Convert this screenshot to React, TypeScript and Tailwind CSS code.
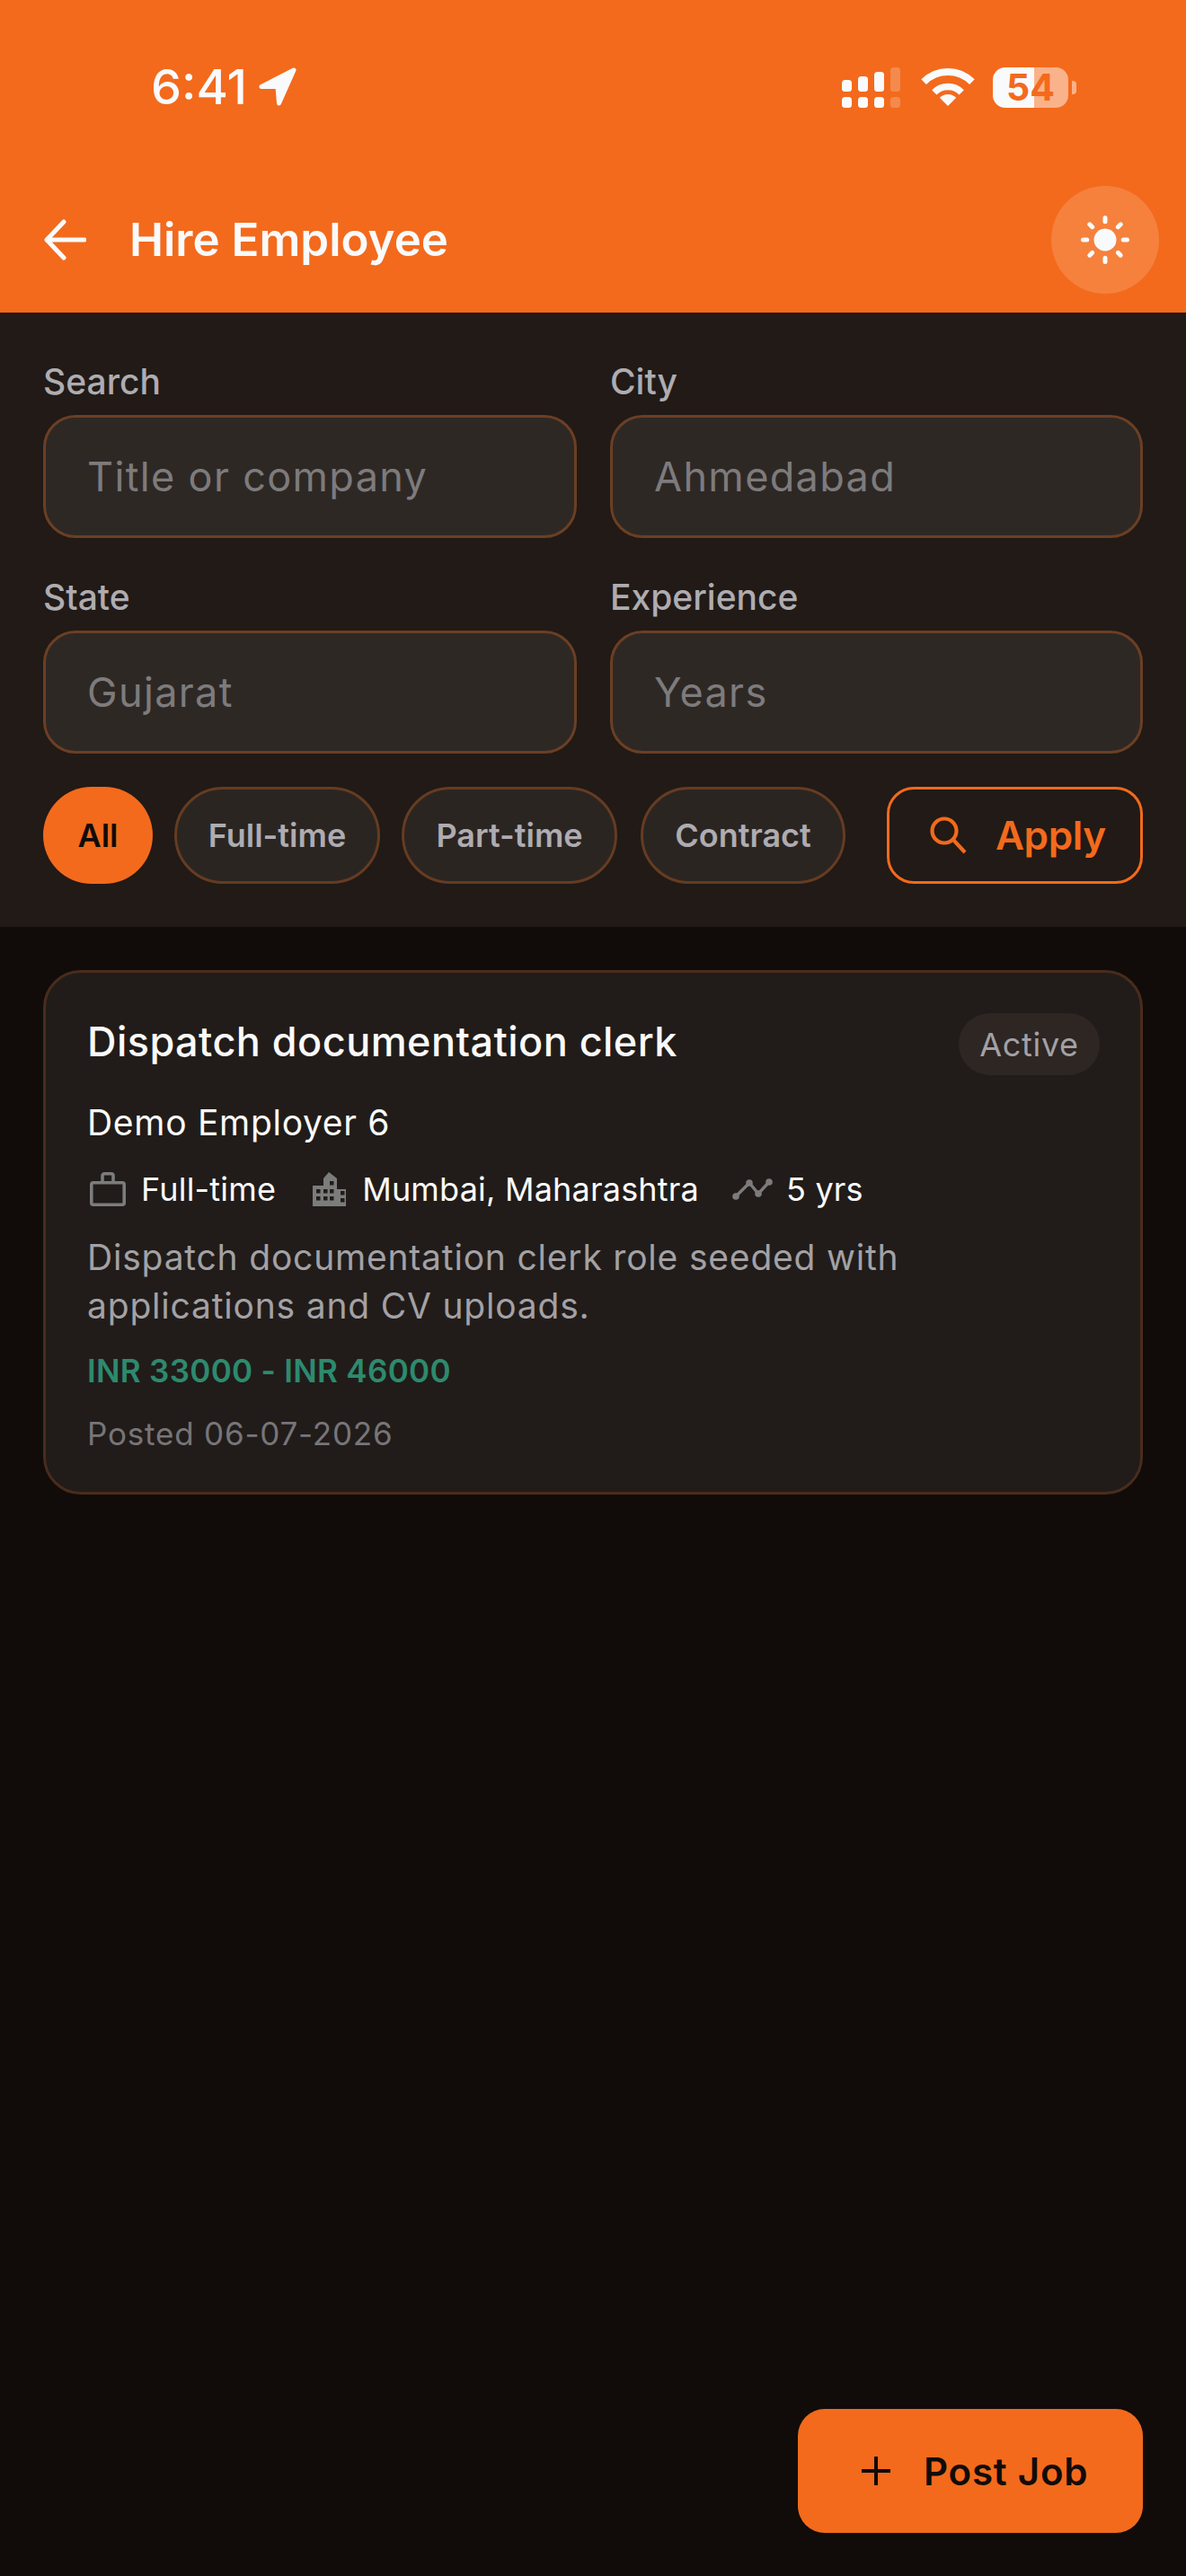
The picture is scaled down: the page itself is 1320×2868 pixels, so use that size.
import React from "react";

const labelCls = "block h-[48px] text-[39px] leading-[48px] text-[#aeacb1] font-medium";
const inputCls =
  "mt-[13px] block w-full h-[137px] rounded-[36px] border-[3px] border-[#6b3f24] bg-[#2e2825] px-[46px] text-[45px] tracking-[1.35px] text-[#e5e5e5] outline-none placeholder:text-[#7d7b7c]";
const chipCls =
  "h-[108px] flex items-center justify-center rounded-full border-[3px] border-[#653c22] bg-[#2b2522] text-[36px] font-semibold text-[#aeacb1]";

function Field({ label, placeholder }: { label: string; placeholder: string }) {
  return (
    <label className="block">
      <span className={labelCls}>{label}</span>
      <input className={inputCls} placeholder={placeholder} />
    </label>
  );
}

function Signal() {
  const cols = [
    { x: 0, top: 14, o: 1 },
    { x: 18, top: 10, o: 1 },
    { x: 36, top: 5, o: 1 },
    { x: 54, top: 0, o: 0.22 },
  ];
  return (
    <svg width="65" height="45" viewBox="0 0 65 45" className="shrink-0">
      {cols.map((c) => (
        <g key={c.x} fill="#f9fafc" opacity={c.o}>
          <rect x={c.x} y={c.top} width="11" height={27 - c.top} rx="3.5" />
          <rect x={c.x} y="33" width="11" height="12" rx="3.5" />
        </g>
      ))}
    </svg>
  );
}

function Wifi() {
  return (
    <svg width="60" height="44" viewBox="0 0 60 44" className="shrink-0">
      <path d="M3.1 16.1A38 38 0 0 1 56.9 16.1" fill="none" stroke="#f9fafc" strokeWidth="8" />
      <path d="M14.8 27.8A21.5 21.5 0 0 1 45.2 27.8" fill="none" stroke="#f9fafc" strokeWidth="7.5" />
      <path d="M30 43L20.8 33.8A13 13 0 0 1 39.2 33.8Z" fill="#f9fafc" />
    </svg>
  );
}

function Battery() {
  return (
    <div className="flex items-center shrink-0">
      <div className="relative flex w-[84px] h-[45px]">
        <div className="h-full w-[46px] rounded-l-[14px] bg-[#f9fafc]" />
        <div className="h-full w-[38px] rounded-r-[14px] bg-[#fab28a]" />
        <span className="absolute inset-0 flex items-center justify-center text-[41px] leading-[45px] font-bold text-[#f36a1c]">
          54
        </span>
      </div>
      <div className="ml-[4px] w-[5px] h-[15px] rounded-r-[4px] bg-[#fab28a]" />
    </div>
  );
}

function Sun() {
  const rays = [
    [33, 8.5, 33, 12.8],
    [33, 53.2, 33, 57.5],
    [8.5, 33, 12.8, 33],
    [53.2, 33, 57.5, 33],
    [15.8, 15.8, 18.7, 18.7],
    [47.3, 47.3, 50.2, 50.2],
    [50.2, 15.8, 47.3, 18.7],
    [18.7, 47.3, 15.8, 50.2],
  ];
  return (
    <svg width="66" height="66" viewBox="0 0 66 66">
      <circle cx="33" cy="33" r="12.5" fill="#f9fafc" />
      {rays.map((r, i) => (
        <line key={i} x1={r[0]} y1={r[1]} x2={r[2]} y2={r[3]} stroke="#f9fafc" strokeWidth="5" strokeLinecap="round" />
      ))}
    </svg>
  );
}

function Briefcase() {
  return (
    <svg width="40" height="38" viewBox="0 0 40 38" className="shrink-0" fill="none" stroke="#7c7c7c" strokeWidth="3.6" strokeLinejoin="round">
      <rect x="1.8" y="11.8" width="36.4" height="24.4" rx="2" />
      <path d="M14 11.5V4a2.2 2.2 0 0 1 2.2-2.2h7.6A2.2 2.2 0 0 1 26 4v7.5" />
    </svg>
  );
}

function Building() {
  const windows = [
    [4, 19], [12, 19], [19, 10], [19, 19], [31, 21],
    [4, 27], [12, 27], [19, 27], [31, 29],
  ];
  return (
    <svg width="37" height="38" viewBox="0 0 37 38" className="shrink-0">
      <path d="M0 15H12V7L18 0L27 7V19H37V38H0Z" fill="#7c7c7c" />
      {windows.map((w, i) => (
        <rect key={i} x={w[0]} y={w[1]} width="4.5" height="4.5" fill="#211c19" />
      ))}
    </svg>
  );
}

function Trend() {
  const pts = [
    [4, 21],
    [19, 6],
    [29, 18],
    [41, 5],
  ];
  return (
    <svg width="45" height="26" viewBox="0 0 45 26" className="shrink-0">
      <polyline points={pts.map((p) => p.join(",")).join(" ")} fill="none" stroke="#7c7c7c" strokeWidth="3.4" />
      {pts.map((p, i) => (
        <circle key={i} cx={p[0]} cy={p[1]} r="3.8" fill="#7c7c7c" />
      ))}
    </svg>
  );
}

export default function App() {
  return (
    <div className="w-[1320px] h-[2868px] flex flex-col bg-[#110c0a] font-['Inter',sans-serif] overflow-hidden">
      <header className="h-[348px] shrink-0 bg-[#f36a1c]">
        <div className="h-[194px] flex items-center pl-[168px] pr-[122px]">
          <span className="text-[54px] leading-[60px] font-medium text-[#f9fafc]">6:41</span>
          <svg width="44" height="44" viewBox="0 0 44 44" className="ml-[12px]">
            <path d="M40 3L4 21.5H22L23.5 40Z" fill="#f9fafc" stroke="#f9fafc" strokeWidth="5" strokeLinejoin="round" />
          </svg>
          <div className="ml-auto flex items-center">
            <Signal />
            <div className="ml-[23px]">
              <Wifi />
            </div>
            <div className="ml-[20px]">
              <Battery />
            </div>
          </div>
        </div>
        <div className="mt-[13px] h-[120px] flex items-center pl-[48px] pr-[30px]">
          <svg width="48" height="46" viewBox="0 0 48 46" fill="none" stroke="#f9fafc" strokeWidth="5" strokeLinecap="round" strokeLinejoin="round" className="shrink-0">
            <path d="M46 23H4M23 3L4 23L23 43" />
          </svg>
          <h1 className="ml-[48px] text-[51px] leading-[60px] font-semibold text-[#f9fafc]">Hire Employee</h1>
          <div className="ml-auto w-[120px] h-[120px] rounded-full bg-[#f5813c] flex items-center justify-center">
            <Sun />
          </div>
        </div>
      </header>

      <section className="h-[684px] shrink-0 bg-[#211a16] px-[48px] pt-[53px]">
        <div className="grid grid-cols-[594px_593px] gap-x-[37px] gap-y-[42px]">
          <Field label="Search" placeholder="Title or company" />
          <Field label="City" placeholder="Ahmedabad" />
          <Field label="State" placeholder="Gujarat" />
          <Field label="Experience" placeholder="Years" />
        </div>
        <div className="mt-[37px] flex items-center gap-[24px]">
          <div className="w-[122px] h-[108px] rounded-full bg-[#f36a1c] flex items-center justify-center text-[36px] font-semibold text-[#110c0a]">
            All
          </div>
          <div className={`${chipCls} w-[229px]`}>Full-time</div>
          <div className={`${chipCls} w-[240px]`}>Part-time</div>
          <div className={`${chipCls} w-[228px] ml-[2px]`}>Contract</div>
          <button className="ml-auto w-[285px] h-[108px] pl-[45px] rounded-[30px] border-[3px] border-[#f36a1c] flex items-center text-[#f36a1c] text-[44px] font-semibold tracking-[-0.4px]">
            <svg width="42" height="42" viewBox="0 0 42 42" fill="none" stroke="#f36a1c" strokeWidth="4.2" className="shrink-0">
              <circle cx="16" cy="16" r="13.5" />
              <path d="M26 26L39 40" />
            </svg>
            <span className="ml-[31px]">Apply</span>
          </button>
        </div>
      </section>

      <main className="px-[48px] pt-[48px]">
        <article className="h-[584px] rounded-[42px] border-[3px] border-[#4a2c1c] bg-[#211c19] px-[46px] pt-[46px]">
          <div className="flex items-start justify-between">
            <h2 className="text-[45px] leading-[62px] font-medium tracking-[0.45px] text-[#fafafa]">Dispatch documentation clerk</h2>
            <span className="h-[69px] w-[157px] -mr-[1px] -mt-[1px] rounded-full bg-[#2d2623] flex items-center justify-center text-[36px] tracking-[0.7px] text-[#a3a1a6]">
              Active
            </span>
          </div>
          <p className="mt-[26px] text-[39px] leading-[54px] tracking-[0.7px] text-[#fafafa]">Demo Employer 6</p>
          <div className="mt-[24px] h-[46px] flex items-center text-[36px] leading-[46px] tracking-[0.2px] text-[#fafafa]">
            <span className="ml-[3px]">
              <Briefcase />
            </span>
            <span className="ml-[17px]">Full-time</span>
            <span className="ml-[41px]">
              <Building />
            </span>
            <span className="ml-[18px]">Mumbai, Maharashtra</span>
            <span className="ml-[37px]">
              <Trend />
            </span>
            <span className="ml-[15px]">5 yrs</span>
          </div>
          <p className="mt-[26px] w-[1000px] text-[39px] leading-[54px] tracking-[0.8px] text-[#a3a1a6]">
            Dispatch documentation clerk role seeded with applications and CV uploads.
          </p>
          <p className="mt-[21px] text-[35px] leading-[48px] font-semibold tracking-[0.3px] text-[#2d8a6e]">INR 33000 - INR 46000</p>
          <p className="mt-[22px] text-[35px] leading-[48px] tracking-[0.8px] text-[#77757a]">Posted 06-07-2026</p>
        </article>
      </main>

      <div className="mt-auto mb-[48px] mr-[48px] self-end w-[384px] h-[138px] pl-[71px] rounded-[30px] bg-[#f36a1c] flex items-center text-[#110c0a]">
        <svg width="32" height="32" viewBox="0 0 32 32" stroke="#110c0a" strokeWidth="4" className="shrink-0">
          <path d="M16 0V32M0 16H32" />
        </svg>
        <span className="ml-[37px] text-[42px] font-semibold tracking-[0.8px]">Post Job</span>
      </div>
    </div>
  );
}
